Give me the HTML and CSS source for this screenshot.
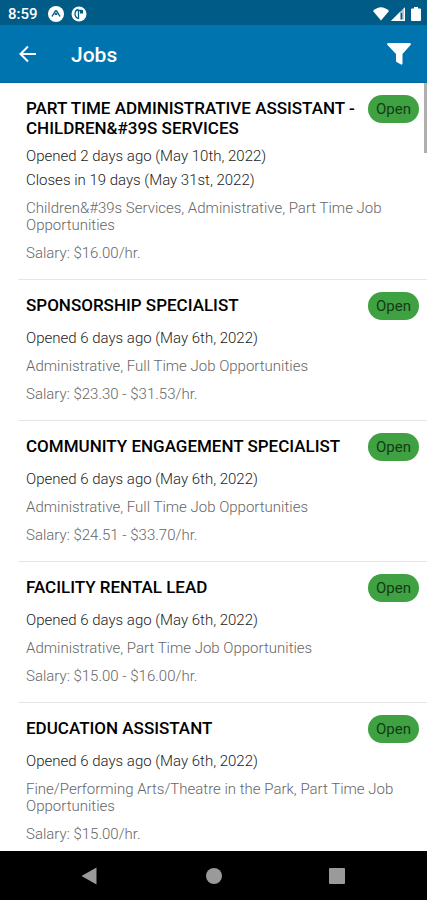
FILE: index.html
```html
<!DOCTYPE html>
<html lang="en">
<head>
<meta charset="utf-8">
<meta name="viewport" content="width=device-width, initial-scale=1">
<title>Jobs</title>
<link rel="stylesheet" href="styles.css">
</head>
<body>
<div class="status">
  <span class="clock">8:59</span>
  <svg class="status-icon" viewBox="0 0 16 16" aria-hidden="true"><circle cx="8" cy="8" r="8" fill="#fff"/><path d="M4 10.500 7 5.500Q8 4 9 5.500L12 10.500M6.800 8.800 8 7.400l1.200 1.400" fill="none" stroke="#005c87" stroke-width="1.400"/></svg>
  <svg class="status-icon" viewBox="0 0 16 16" aria-hidden="true"><circle cx="8" cy="8" r="7.500" fill="#fff"/><path d="M7.500 3.500Q4 4 4 8 4 11.500 7.500 12.500V4.500H11" fill="none" stroke="#005c87" stroke-width="1.300"/><path d="M9 4H12V7.500H9z" fill="#005c87"/></svg>
  <span class="spacer"></span>
  <svg class="wifi" viewBox="0 0 16 14" aria-hidden="true"><path d="M0 4Q8-3.500 16 4L8 13.500z" fill="#fff"/></svg>
  <svg class="signal" viewBox="0 0 14 14" aria-hidden="true"><path d="M14 0V14H0z" fill="#a9c5d5"/><path d="M9 5V14H0z" fill="#fff"/><path d="M10.500 6V12.500" stroke="#005c87" stroke-width="1.500"/><path d="M13.400 1V13.400H1" fill="none" stroke="#fff" stroke-width="1.200"/></svg>
  <svg class="battery" viewBox="0 0 10 14" aria-hidden="true"><path d="M3 0H7V1.500H9Q10 1.500 10 2.500V13Q10 14 9 14H1Q0 14 0 13V2.500Q0 1.500 1 1.500H3z" fill="#fff"/></svg>
</div>
<header class="appbar">
  <button class="icon-button" type="button" aria-label="Back"><svg width="18" height="18" viewBox="0 0 18 18" aria-hidden="true"><path d="M17 9H2M9 1.500 1.500 9 9 16.500" fill="none" stroke="#fff" stroke-width="2"/></svg></button>
  <h1 class="heading">Jobs</h1>
  <button class="icon-button" type="button" aria-label="Filter"><svg width="24" height="22" viewBox="0 0 24 22" aria-hidden="true"><path d="M1 0H23Q24.500 .5 23.500 2L15.500 11V20.500Q15.300 22 14 21.500L9.500 19Q9 18.600 9 18V11L.5 2Q-.5 .5 1 0z" fill="#fff"/></svg></button>
</header>
<main class="content">
  <div class="scroll-thumb"></div>
  <ul class="jobs">
    <li class="job">
      <div class="job-head"><h2 class="title">PART TIME ADMINISTRATIVE ASSISTANT - CHILDREN&amp;#39S SERVICES</h2><span class="badge">Open</span></div>
      <p class="date">Opened 2 days ago (May 10th, 2022)</p>
      <p class="date">Closes in 19 days (May 31st, 2022)</p>
      <p class="category">Children&amp;#39s Services, Administrative, Part Time Job Opportunities</p>
      <p class="salary">Salary: $16.00/hr.</p>
    </li>
    <li class="job">
      <div class="job-head"><h2 class="title">SPONSORSHIP SPECIALIST</h2><span class="badge">Open</span></div>
      <p class="date">Opened 6 days ago (May 6th, 2022)</p>
      <p class="category">Administrative, Full Time Job Opportunities</p>
      <p class="salary">Salary: $23.30 - $31.53/hr.</p>
    </li>
    <li class="job">
      <div class="job-head"><h2 class="title">COMMUNITY ENGAGEMENT SPECIALIST</h2><span class="badge">Open</span></div>
      <p class="date">Opened 6 days ago (May 6th, 2022)</p>
      <p class="category">Administrative, Full Time Job Opportunities</p>
      <p class="salary">Salary: $24.51 - $33.70/hr.</p>
    </li>
    <li class="job">
      <div class="job-head"><h2 class="title">FACILITY RENTAL LEAD</h2><span class="badge">Open</span></div>
      <p class="date">Opened 6 days ago (May 6th, 2022)</p>
      <p class="category">Administrative, Part Time Job Opportunities</p>
      <p class="salary">Salary: $15.00 - $16.00/hr.</p>
    </li>
    <li class="job">
      <div class="job-head"><h2 class="title">EDUCATION ASSISTANT</h2><span class="badge">Open</span></div>
      <p class="date">Opened 6 days ago (May 6th, 2022)</p>
      <p class="category">Fine/Performing Arts/Theatre in the Park, Part Time Job Opportunities</p>
      <p class="salary">Salary: $15.00/hr.</p>
    </li>
  </ul>
</main>
<nav class="navbar" aria-label="System">
  <button class="icon-button" type="button" aria-label="Back"><svg width="20" height="18" viewBox="0 0 20 18" aria-hidden="true"><path d="M15.500 .5V17.500L.5 9z" fill="#9a9a9a"/></svg></button>
  <button class="icon-button" type="button" aria-label="Home"><svg width="16" height="16" viewBox="0 0 16 16" aria-hidden="true"><circle cx="8" cy="8" r="8" fill="#9a9a9a"/></svg></button>
  <button class="icon-button" type="button" aria-label="Recent apps"><svg width="16" height="16" viewBox="0 0 16 16" aria-hidden="true"><rect width="16" height="16" rx="1" fill="#9a9a9a"/></svg></button>
</nav>
</body>
</html>
```
FILE: styles.css
```css
* { box-sizing: border-box; margin: 0; padding: 0; }
body {
  display: flex;
  flex-direction: column;
  height: 100vh;
  background: #fff;
  color: #000;
  font-family: Roboto, sans-serif;
}
.status {
  display: flex;
  flex: none;
  align-items: center;
  height: 25px;
  padding: 2px 6px 0 8px;
  background: #005c87;
}
.clock { color: #fff; font-size: 15px; font-weight: 500; line-height: 16px; }
.status-icon { width: 16px; height: 16px; margin-left: 7px; }
.clock + .status-icon { margin-left: 10px; }
.spacer { flex: 1; }
.wifi { width: 16px; height: 14px; }
.signal { width: 14px; height: 14px; margin-left: 2px; }
.battery { width: 10px; height: 14px; margin-left: 6px; }
.appbar {
  display: flex;
  flex: none;
  align-items: center;
  height: 58px;
  padding: 0 12px;
  background: #0074af;
  border-bottom: 1px solid #0068a0;
}
.icon-button {
  display: flex;
  align-items: center;
  justify-content: center;
  width: 32px;
  height: 32px;
  border: 0;
  background: none;
}
.heading {
  flex: 1;
  margin-left: 27px;
  padding-top: 2px;
  color: #fff;
  font-size: 21px;
  font-weight: 500;
  line-height: 28px;
}
.content { position: relative; flex: 1; min-height: 0; overflow: hidden; }
.scroll-thumb {
  position: absolute;
  top: 0;
  right: 0;
  width: 3px;
  height: 70px;
  background: #b0b0b0;
}
.jobs { padding-left: 18px; list-style: none; }
.job { padding: 12px 8px 17px; border-bottom: 1px solid #e6e6e6; }
.job-head {
  display: flex;
  align-items: flex-start;
  justify-content: space-between;
  gap: 8px;
  margin-bottom: 6px;
}
.title { padding-top: 3px; font-size: 17px; font-weight: 500; line-height: 20px; }
.badge {
  flex: none;
  padding: 0 8px;
  border-radius: 14px;
  background: #3fa142;
  color: #123c14;
  font-size: 15px;
  line-height: 28px;
}
.date { color: #222; font-size: 15px; font-weight: 300; line-height: 24px; }
.category, .salary { color: #666; font-size: 15px; font-weight: 300; line-height: 17px; }
.category { margin: 8px 0 11px; }
.navbar {
  display: flex;
  flex: none;
  align-items: center;
  justify-content: center;
  gap: 91px;
  height: 49px;
  background: #000;
}
```
